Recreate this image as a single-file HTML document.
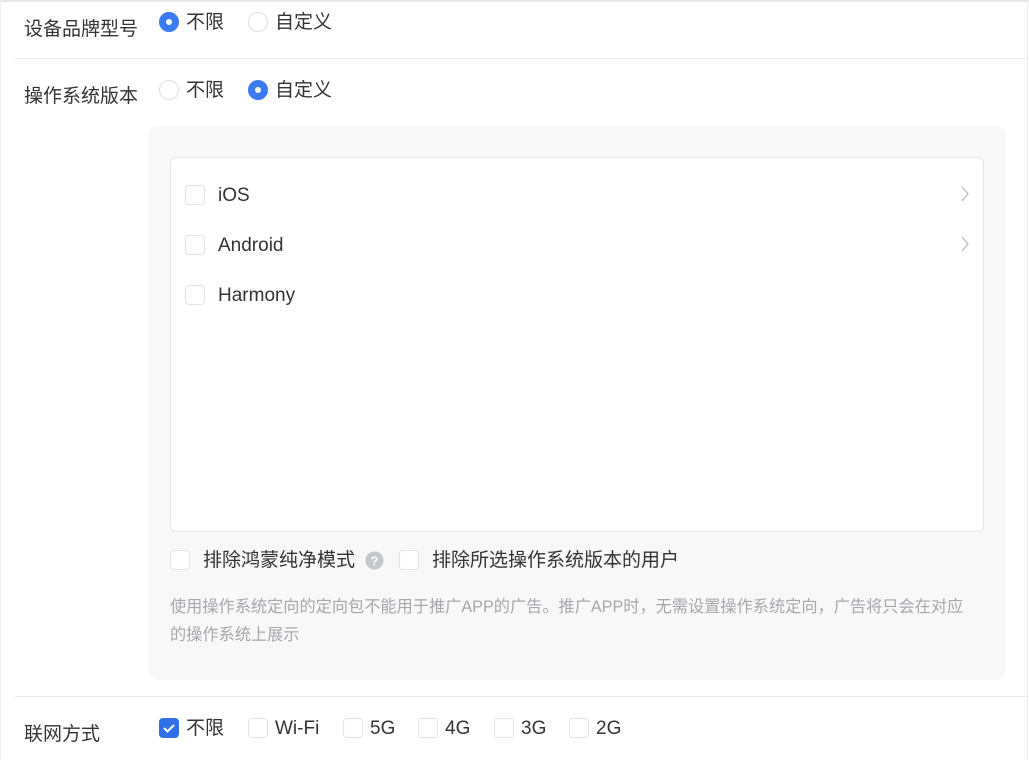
<!DOCTYPE html>
<html><head><meta charset="utf-8"><style>
*{box-sizing:border-box;margin:0;padding:0}
body{width:1029px;height:760px;background:#fff;font-family:"Liberation Sans","Noto Sans CJK SC",sans-serif;color:#333;position:relative;overflow:hidden}
.top{position:absolute;left:0;top:0;width:1029px;height:2px;background:#e8e8e8}
.rb{position:absolute;left:1027px;top:0;width:1px;height:760px;background:#eee}
.lb{position:absolute;left:0;top:0;width:1px;height:760px;background:#f0f0f0}
.hr{position:absolute;left:15px;width:1012px;height:1px;background:#e8e8e8}
.t{position:absolute;font-size:19px;line-height:22px;white-space:nowrap}
.l{font-size:19px}
.radio{position:absolute;width:20px;height:20px;border-radius:50%;border:1px solid #dcdfe6;background:#fff}
.radio.on{background:#3a7bf0;border-color:#3a7bf0}
.radio.on::after{content:"";position:absolute;left:6px;top:6px;width:6px;height:6px;border-radius:50%;background:#fff}
.cb{position:absolute;width:20px;height:20px;border-radius:4px;border:1px solid #e3e4e8;background:#fff}
.cb.on{background:#2f6fe8;border-color:#2f6fe8}
.gray{position:absolute;left:148px;top:126px;width:858px;height:554px;background:#f8f8f9;border-radius:10px}
.box{position:absolute;left:170px;top:157px;width:814px;height:375px;background:#fff;border:1px solid #e5e6eb;border-radius:6px}
.hint{position:absolute;left:170px;top:593px;width:806px;font-size:16.2px;line-height:28px;color:#a5a7ad}
</style></head><body>
<div class="top"></div><div class="lb"></div><div class="rb"></div>
<div class="t" style="left:24px;top:19px">设备品牌型号</div>
<div class="radio on" style="left:159px;top:12px"></div><div class="t" style="left:186px;top:12px">不限</div>
<div class="radio" style="left:248px;top:12px"></div><div class="t" style="left:275px;top:12px">自定义</div>
<div class="hr" style="top:58px"></div>
<div class="t" style="left:24px;top:86px">操作系统版本</div>
<div class="radio" style="left:159px;top:80px"></div><div class="t" style="left:186px;top:80px">不限</div>
<div class="radio on" style="left:248px;top:80px"></div><div class="t" style="left:275px;top:80px">自定义</div>
<div class="gray"></div>
<div class="box"></div>
<div class="cb" style="left:185px;top:185px"></div><div class="t l" style="left:218px;top:185px">iOS</div>
<div class="cb" style="left:185px;top:235px"></div><div class="t l" style="left:218px;top:235px">Android</div>
<div class="cb" style="left:185px;top:285px"></div><div class="t l" style="left:218px;top:285px">Harmony</div>
<svg style="position:absolute;left:960px;top:186px" width="10" height="16"><path d="M2 1l6 7-6 7" fill="none" stroke="#b8bac0" stroke-width="1.3"/></svg>
<svg style="position:absolute;left:960px;top:236px" width="10" height="16"><path d="M2 1l6 7-6 7" fill="none" stroke="#b8bac0" stroke-width="1.3"/></svg>
<div class="cb" style="left:170px;top:550px"></div><div class="t" style="left:203px;top:550px">排除鸿蒙纯净模式</div>
<svg style="position:absolute;left:365px;top:551px" width="19" height="19"><circle cx="9.5" cy="9.5" r="9" fill="#c5c7cc"/><text x="9.5" y="14.5" font-size="13" font-weight="bold" fill="#fff" text-anchor="middle" font-family="Liberation Sans">?</text></svg>
<div class="cb" style="left:399px;top:550px"></div><div class="t" style="left:432px;top:550px">排除所选操作系统版本的用户</div>
<div class="hint">使用操作系统定向的定向包不能用于推广APP的广告。推广APP时，无需设置操作系统定向，广告将只会在对应的操作系统上展示</div>
<div class="hr" style="top:696px"></div>
<div class="t" style="left:24px;top:724px">联网方式</div>
<div class="cb on" style="left:159px;top:718px"></div>
<svg style="position:absolute;left:159px;top:718px" width="20" height="20"><path d="M5 10l3.5 3.5L15 7" fill="none" stroke="#fff" stroke-width="2"/></svg>
<div class="t" style="left:186px;top:718px">不限</div>
<div class="cb" style="left:248px;top:718px"></div><div class="t l" style="left:275px;top:718px">Wi-Fi</div>
<div class="cb" style="left:343px;top:718px"></div><div class="t l" style="left:370px;top:718px">5G</div>
<div class="cb" style="left:418px;top:718px"></div><div class="t l" style="left:445px;top:718px">4G</div>
<div class="cb" style="left:494px;top:718px"></div><div class="t l" style="left:521px;top:718px">3G</div>
<div class="cb" style="left:569px;top:718px"></div><div class="t l" style="left:596px;top:718px">2G</div>
</body></html>
